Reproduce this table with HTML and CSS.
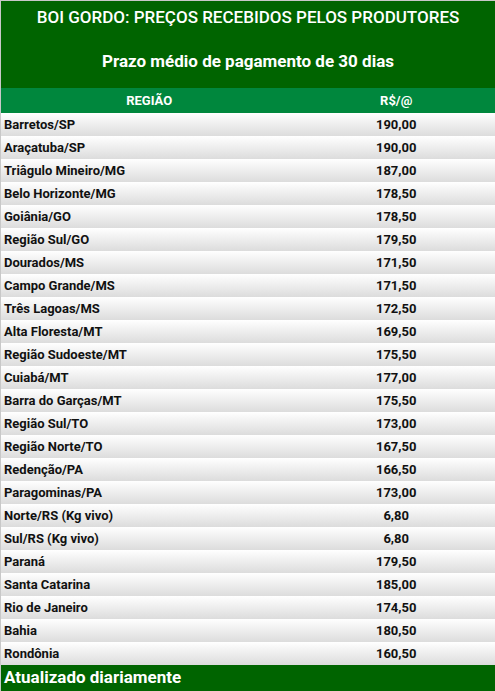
FILE: index.html
```html
<!DOCTYPE html>
<html lang="pt-BR">
<head>
  <meta charset="UTF-8">
  <meta name="viewport" content="width=device-width, initial-scale=1.0">
  <title>Boi Gordo - Preços</title>
  <link rel="stylesheet" href="styles.css">
</head>
<body>

  <div class="board">
    <!-- Header -->
    <div class="board-head">
      <h1>BOI GORDO: PREÇOS RECEBIDOS PELOS PRODUTORES</h1>
      <h2>Prazo médio de pagamento de 30 dias</h2>
    </div>

    <!-- Prices -->
    <table class="prices">
      <thead>
        <tr>
          <th class="col-region">REGIÃO</th>
          <th class="col-price">R$/@</th>
        </tr>
      </thead>
      <tbody>
        <tr><td>Barretos/SP</td><td class="price">190,00</td></tr>
        <tr><td>Araçatuba/SP</td><td class="price">190,00</td></tr>
        <tr><td>Triâgulo Mineiro/MG</td><td class="price">187,00</td></tr>
        <tr><td>Belo Horizonte/MG</td><td class="price">178,50</td></tr>
        <tr><td>Goiânia/GO</td><td class="price">178,50</td></tr>
        <tr><td>Região Sul/GO</td><td class="price">179,50</td></tr>
        <tr><td>Dourados/MS</td><td class="price">171,50</td></tr>
        <tr><td>Campo Grande/MS</td><td class="price">171,50</td></tr>
        <tr><td>Três Lagoas/MS</td><td class="price">172,50</td></tr>
        <tr><td>Alta Floresta/MT</td><td class="price">169,50</td></tr>
        <tr><td>Região Sudoeste/MT</td><td class="price">175,50</td></tr>
        <tr><td>Cuiabá/MT</td><td class="price">177,00</td></tr>
        <tr><td>Barra do Garças/MT</td><td class="price">175,50</td></tr>
        <tr><td>Região Sul/TO</td><td class="price">173,00</td></tr>
        <tr><td>Região Norte/TO</td><td class="price">167,50</td></tr>
        <tr><td>Redenção/PA</td><td class="price">166,50</td></tr>
        <tr><td>Paragominas/PA</td><td class="price">173,00</td></tr>
        <tr><td>Norte/RS (Kg vivo)</td><td class="price">6,80</td></tr>
        <tr><td>Sul/RS (Kg vivo)</td><td class="price">6,80</td></tr>
        <tr><td>Paraná</td><td class="price">179,50</td></tr>
        <tr><td>Santa Catarina</td><td class="price">185,00</td></tr>
        <tr><td>Rio de Janeiro</td><td class="price">174,50</td></tr>
        <tr><td>Bahia</td><td class="price">180,50</td></tr>
        <tr><td>Rondônia</td><td class="price">160,50</td></tr>
      </tbody>
    </table>

    <!-- Footer -->
    <div class="board-foot">Atualizado diariamente</div>
  </div>

</body>
</html>
```

FILE: styles.css
```css
body {
  margin: 0;
  font-family: Roboto, "Liberation Sans", Arial, sans-serif;
  background: #fff;
}

.board {
  border-top: 1px solid #c8c8c8;
  border-left: 1px solid #c8c8c8;
}

/* Header */
.board-head {
  background-color: #006400;
  color: white;
  text-align: center;
  height: 87px;
  padding-top: 6px;
  box-sizing: border-box;
}

.board-head h1 {
  margin: 0;
  font-size: 17px;
  font-weight: 500;
  line-height: 20px;
}

.board-head h2 {
  margin: 24px 0 0;
  font-size: 17px;
  font-weight: bold;
  line-height: 20px;
}

/* Table */
.prices {
  width: 100%;
  border-collapse: collapse;
}

.prices th {
  background-color: #00873d;
  color: white;
  font-size: 13px;
  font-weight: bold;
  height: 25px;
  padding: 0;
}

.col-region {
  width: 60%;
}

.prices td {
  background: linear-gradient(#ffffff, #dcdcdc);
  color: #111;
  font-size: 13px;
  font-weight: bold;
  height: 23px;
  padding: 0 3px;
}

.prices td.price {
  text-align: center;
}

/* Footer */
.board-foot {
  background-color: #006400;
  color: white;
  font-size: 17px;
  font-weight: bold;
  height: 30px;
  line-height: 24px;
  padding: 0 3px;
}
```
